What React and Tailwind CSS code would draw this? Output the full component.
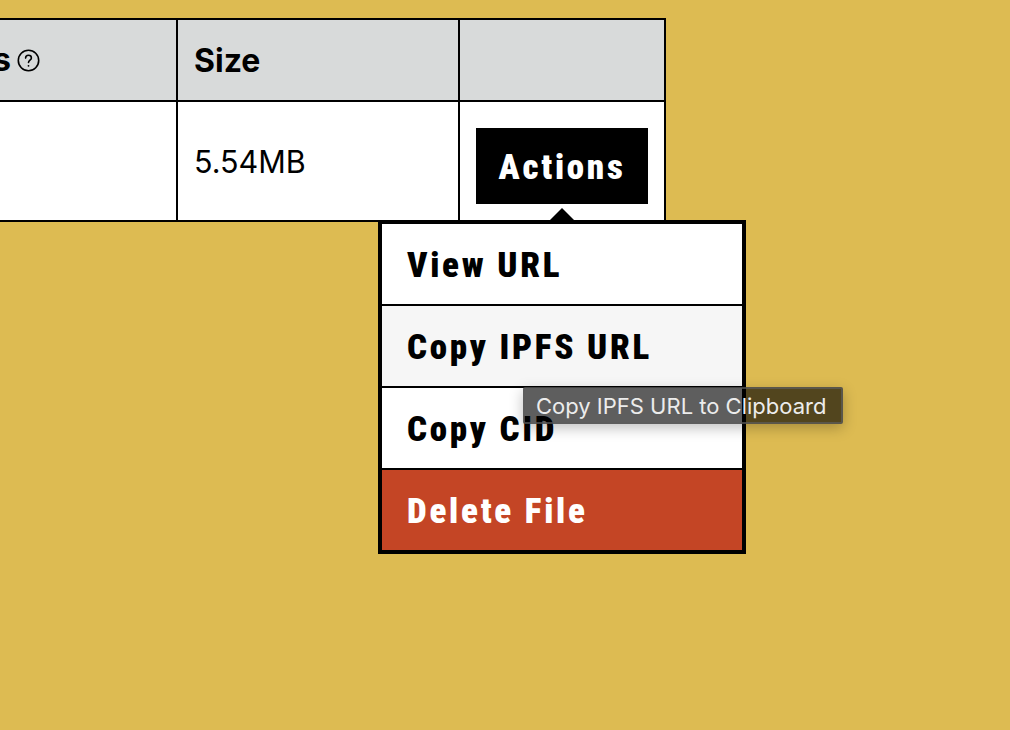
import React from 'react';

const display = "font-['Roboto',sans-serif] font-black font-stretch-[75%] tracking-[2.75px] text-[35px] leading-none pt-[2px]";

const menuItems = [
    { label: 'View URL', bg: 'bg-white text-black', height: 'h-[80px]' },
    { label: 'Copy IPFS URL', bg: 'bg-[#f6f6f6] text-black', height: 'h-[82px]' },
    { label: 'Copy CID', bg: 'bg-white text-black', height: 'h-[82px]' },
    { label: 'Delete File', bg: 'bg-[#c44525] text-white', height: 'h-[82px]' },
];

const HelpIcon = () => (
    <svg width="23" height="23" viewBox="0 0 23 23" fill="none" stroke="#000" strokeWidth="1.6" className="shrink-0">
        <circle cx="11.5" cy="11.5" r="10.2" />
        <path d="M8.6 9.1c0-1.7 1.3-2.8 2.9-2.8 1.7 0 2.9 1.1 2.9 2.6 0 2.2-2.9 2.3-2.9 4.6" strokeLinecap="round" />
        <circle cx="11.5" cy="16.8" r="0.9" fill="#000" stroke="none" />
    </svg>
);

const App = () => {
    return (
        <div className="w-[1010px] h-[730px] overflow-hidden bg-[#ddbb52] pt-[18px] font-['Inter',sans-serif] text-black">
            <div className="w-[666px] border-y-2 border-r-2 border-black bg-white">
                <div className="flex h-[82px] bg-[#d8dada] border-b-2 border-black font-bold text-[32px]">
                    <div className="w-[176px] flex items-center justify-end pr-[136px] gap-[6px]">
                        <span>s</span>
                        <HelpIcon />
                    </div>
                    <div className="w-[282px] border-l-2 border-black flex items-center pl-[16px] pt-[2px]">Size</div>
                    <div className="flex-1 border-l-2 border-black"></div>
                </div>
                <div className="flex h-[118px] text-[30.5px]">
                    <div className="w-[176px]"></div>
                    <div className="w-[282px] border-l-2 border-black flex items-center pl-[16px] pt-[2px]">5.54MB</div>
                    <div className="flex-1 border-l-2 border-black pl-[16px] pt-[26px]">
                        <button className={`w-[172px] h-[76px] bg-black text-white flex items-center justify-center ${display}`}>Actions</button>
                    </div>
                </div>
            </div>

            <div className="relative">
                <div className="absolute left-[378px] top-[-2px] w-[368px] border-4 border-black bg-black">
                    <div className="absolute left-[167px] top-[-16px] w-0 h-0 border-x-[13px] border-x-transparent border-b-[13px] border-b-black"></div>
                    {menuItems.map((item, i) => (
                        <div key={item.label} className={`${item.height} ${item.bg} ${i > 0 ? 'border-t-2 border-black' : ''} flex items-center pl-[25px] ${display}`}>
                            {item.label}
                        </div>
                    ))}
                </div>
                <div className="absolute left-[523px] top-[165px] w-[320px] h-[37px] bg-black/63 border-2 border-[#5c5c5c]/70 rounded-[2px] shadow-[0_4px_14px_rgba(0,0,0,0.25)] text-[#ececec] text-[22px] leading-none flex items-center pl-[11px] whitespace-nowrap">
                    Copy IPFS URL to Clipboard
                </div>
            </div>
        </div>
    );
};

export default App;
